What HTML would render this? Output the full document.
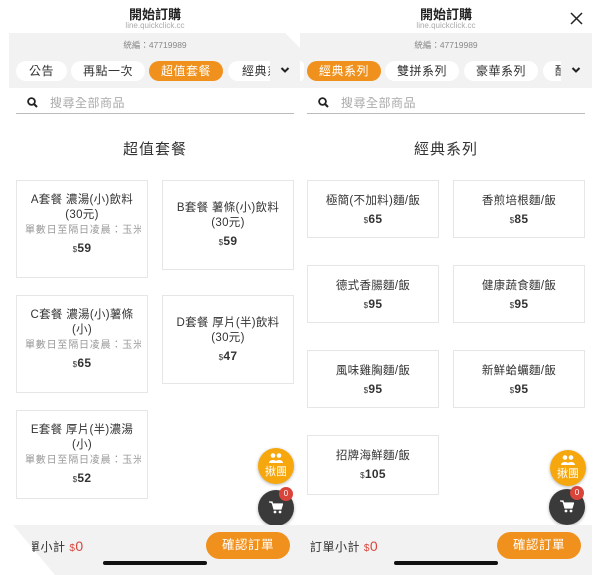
<!DOCTYPE html>
<html><head><meta charset="utf-8"><style>
*{margin:0;padding:0;box-sizing:border-box}
body{width:600px;height:575px;background:#fff;position:relative;overflow:hidden;font-family:"Liberation Sans","Noto Sans CJK TC",sans-serif;color:#333}
.a{position:absolute}
.title{font-size:13px;font-weight:bold;color:#222;text-align:center;width:120px}
.url{font-size:8px;color:#aaa;text-align:center;width:120px}
.gray{background:#f2f2f2}
.tax{font-size:8.5px;color:#888;text-align:center}
.pill{position:absolute;height:20px;border-radius:10px;background:#fff;font-size:12px;line-height:20px;text-align:center;color:#333;white-space:nowrap;overflow:hidden;letter-spacing:0.5px}
.pill.on{background:#f0911d;color:#fff}
.search{position:absolute;height:20px;border-bottom:1px solid #bbb;font-size:12px;color:#aaa;line-height:18px;letter-spacing:0.5px}
.h2{position:absolute;font-size:15px;color:#333;text-align:center;width:200px;letter-spacing:1px}
.card{position:absolute;width:132px;border:1px solid #e6e6e6;background:#fff;text-align:center;font-size:11.5px;color:#333;line-height:15px;padding:12px 6px 0;overflow:hidden;letter-spacing:0.3px}
.card .d{font-size:10px;color:#999;white-space:nowrap;overflow:hidden;text-align:left;padding-left:2px;letter-spacing:0.8px}
.card .p{font-weight:bold;font-size:12px;margin-top:3px}
.card .p small{font-size:8px;font-weight:normal}
.fab1{position:absolute;width:36px;height:36px;border-radius:50%;background:#f5a70d;color:#fff;font-size:11px;text-align:center;line-height:12px;padding-top:5px;box-shadow:0 1px 3px rgba(0,0,0,.3)}
.fab2{position:absolute;width:36px;height:36px;border-radius:50%;background:#3a3a3a;box-shadow:0 1px 3px rgba(0,0,0,.3)}
.badge{position:absolute;width:14px;height:14px;border-radius:50%;background:#d9453b;color:#fff;font-size:8px;text-align:center;line-height:14px}
.btn{position:absolute;width:84px;height:27px;border-radius:14px;background:#f0911d;color:#fff;font-size:12.5px;text-align:center;line-height:27px;letter-spacing:0.5px}
.tot{position:absolute;font-size:12px;color:#333;letter-spacing:0.5px}
.tot span{color:#d9453b;font-size:14px}
.tot span small{font-size:10px}
.home{position:absolute;height:4px;width:104px;border-radius:2px;background:#111;top:561px}
</style></head><body>
<div class="a title" style="left:95px;top:4px">開始訂購</div>
<div class="a url" style="left:95px;top:21px">line.quickclick.cc</div>
<div class="a gray" style="left:9px;top:33px;width:291px;height:55px;clip-path:polygon(0 0,276px 0,291px 15px,291px 100%,0 100%)"></div>
<div class="a tax" style="left:95px;top:39px;width:120px">統編：47719989</div>
<div class="pill" style="left:16px;top:61px;width:51px">公告</div>
<div class="pill" style="left:71px;top:61px;width:74px">再點一次</div>
<div class="pill on" style="left:149px;top:61px;width:74px">超值套餐</div>
<div class="pill" style="left:228px;top:61px;width:42px;border-radius:10px 0 0 10px;text-align:left;padding-left:14px">經典系</div>
<svg class="a" style="left:280px;top:66px" width="10" height="8" viewBox="0 0 10 8"><path d="M1.5 2l3.5 3.5L8.5 2" stroke="#222" stroke-width="2" fill="none"/></svg>
<div class="search" style="left:16px;top:94px;width:278px"><svg style="position:absolute;left:11px;top:3px" width="11" height="11" viewBox="0 0 11 11"><circle cx="4.5" cy="4.5" r="3.4" stroke="#222" stroke-width="1.8" fill="none"/><path d="M7 7l3 3" stroke="#222" stroke-width="2"/></svg><span style="position:absolute;left:34px">搜尋全部商品</span></div>
<div class="h2" style="left:55px;top:138px">超值套餐</div>
<div class="card" style="left:16px;top:180px;height:98px">A套餐 濃湯(小)飲料<br>(30元)<div class="d">單數日至隔日凌晨：玉米濃湯</div><div class="p"><small>$</small>59</div></div>
<div class="card" style="left:162px;top:180px;height:90px;padding-top:20px">B套餐 薯條(小)飲料<br>(30元)<div class="p"><small>$</small>59</div></div>
<div class="card" style="left:16px;top:295px;height:98px">C套餐 濃湯(小)薯條<br>(小)<div class="d">單數日至隔日凌晨：玉米濃湯</div><div class="p"><small>$</small>65</div></div>
<div class="card" style="left:162px;top:295px;height:89px;padding-top:20px">D套餐 厚片(半)飲料<br>(30元)<div class="p"><small>$</small>47</div></div>
<div class="card" style="left:16px;top:410px;height:89px">E套餐 厚片(半)濃湯<br>(小)<div class="d">單數日至隔日凌晨：玉米濃湯</div><div class="p"><small>$</small>52</div></div>
<div class="a title" style="left:386px;top:4px">開始訂購</div>
<div class="a url" style="left:386px;top:21px">line.quickclick.cc</div>
<svg class="a" style="left:570px;top:12px" width="13" height="13" viewBox="0 0 13 13"><path d="M1 1l11 11M12 1L1 12" stroke="#222" stroke-width="1.5"/></svg>
<div class="a gray" style="left:300px;top:33px;width:292px;height:55px"></div>
<div class="a tax" style="left:386px;top:39px;width:120px">統編：47719989</div>
<div class="pill" style="left:300px;top:61px;width:4px;border-radius:0 10px 10px 0"></div>
<div class="pill on" style="left:307px;top:61px;width:74px">經典系列</div>
<div class="pill" style="left:385px;top:61px;width:74px">雙拼系列</div>
<div class="pill" style="left:464px;top:61px;width:74px">豪華系列</div>
<div class="pill" style="left:543px;top:61px;width:18px;border-radius:10px 0 0 10px;text-align:left;padding-left:12px">酷</div>
<svg class="a" style="left:571px;top:66px" width="10" height="8" viewBox="0 0 10 8"><path d="M1.5 2l3.5 3.5L8.5 2" stroke="#222" stroke-width="2" fill="none"/></svg>
<div class="search" style="left:307px;top:94px;width:278px"><svg style="position:absolute;left:11px;top:3px" width="11" height="11" viewBox="0 0 11 11"><circle cx="4.5" cy="4.5" r="3.4" stroke="#222" stroke-width="1.8" fill="none"/><path d="M7 7l3 3" stroke="#222" stroke-width="2"/></svg><span style="position:absolute;left:34px">搜尋全部商品</span></div>
<div class="h2" style="left:346px;top:138px">經典系列</div>
<div class="card" style="left:307px;top:180px;height:58px;padding-top:13px">極簡(不加料)麵/飯<div class="p"><small>$</small>65</div></div>
<div class="card" style="left:453px;top:180px;height:58px;padding-top:13px">香煎培根麵/飯<div class="p"><small>$</small>85</div></div>
<div class="card" style="left:307px;top:265px;height:58px;padding-top:13px">德式香腸麵/飯<div class="p"><small>$</small>95</div></div>
<div class="card" style="left:453px;top:265px;height:58px;padding-top:13px">健康蔬食麵/飯<div class="p"><small>$</small>95</div></div>
<div class="card" style="left:307px;top:350px;height:58px;padding-top:13px">風味雞胸麵/飯<div class="p"><small>$</small>95</div></div>
<div class="card" style="left:453px;top:350px;height:58px;padding-top:13px">新鮮蛤蠣麵/飯<div class="p"><small>$</small>95</div></div>
<div class="card" style="left:307px;top:435px;height:60px;padding-top:13px">招牌海鮮麵/飯<div class="p"><small>$</small>105</div></div>
<div class="fab1" style="left:258px;top:448px"><svg width="16" height="10" viewBox="0 0 16 10"><circle cx="5" cy="2.5" r="2.3" fill="#fff"/><circle cx="11" cy="2.5" r="2.3" fill="#fff"/><path d="M1 10c0-4 8-4 8 0zM7 10c0-4 8-4 8 0z" fill="#fff"/></svg><br>揪團</div>
<div class="fab2" style="left:258px;top:490px"><svg style="position:absolute;left:11px;top:11px" width="14" height="13" viewBox="0 0 14 13"><path d="M0 1h3l2 7h7l1.5-5H4" fill="#fff" stroke="#fff" stroke-width="1.3"/><circle cx="6" cy="11" r="1.4" fill="#fff"/><circle cx="11" cy="11" r="1.4" fill="#fff"/></svg></div>
<div class="badge" style="left:279px;top:487px">0</div>
<div class="fab1" style="left:550px;top:450px"><svg width="16" height="10" viewBox="0 0 16 10"><circle cx="5" cy="2.5" r="2.3" fill="#fff"/><circle cx="11" cy="2.5" r="2.3" fill="#fff"/><path d="M1 10c0-4 8-4 8 0zM7 10c0-4 8-4 8 0z" fill="#fff"/></svg><br>揪團</div>
<div class="fab2" style="left:549px;top:489px"><svg style="position:absolute;left:11px;top:11px" width="14" height="13" viewBox="0 0 14 13"><path d="M0 1h3l2 7h7l1.5-5H4" fill="#fff" stroke="#fff" stroke-width="1.3"/><circle cx="6" cy="11" r="1.4" fill="#fff"/><circle cx="11" cy="11" r="1.4" fill="#fff"/></svg></div>
<div class="badge" style="left:570px;top:486px">0</div>
<div class="a gray" style="left:13px;top:525px;width:287px;height:50px;clip-path:polygon(0 0,100% 0,100% 100%,42px 100%)"></div>
<div class="tot" style="left:28px;top:538px;clip-path:inset(0 0 0 4px)">單小計 <span><small>$</small>0</span></div>
<div class="btn" style="left:206px;top:532px">確認訂單</div>
<div class="a gray" style="left:300px;top:525px;width:292px;height:50px"></div>
<div class="tot" style="left:310px;top:538px">訂單小計 <span><small>$</small>0</span></div>
<div class="btn" style="left:497px;top:532px">確認訂單</div>
<div class="home" style="left:103px"></div>
<div class="home" style="left:394px"></div>
</body></html>
